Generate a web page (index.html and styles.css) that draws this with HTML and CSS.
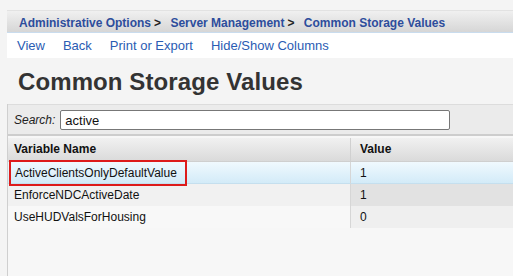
FILE: index.html
```html
<!DOCTYPE html>
<html>
<head>
<meta charset="utf-8">
<link rel="stylesheet" href="styles.css">
</head>
<body>
<div class="page">
  <div class="crumbs">
    <span class="crumb">Administrative Options</span><span class="sep">&gt;</span>
    <span class="crumb">Server Management</span><span class="sep">&gt;</span>
    <span class="crumb">Common Storage Values</span>
  </div>
  <div class="menu">
    <a>View</a><a>Back</a><a>Print or Export</a><a>Hide/Show Columns</a>
  </div>
  <h1 class="title">Common Storage Values</h1>
  <div class="panel">
    <div class="search">
      <label>Search:</label>
      <div class="input">active</div>
    </div>
    <div class="grid">
      <div class="hcell name">Variable Name</div>
      <div class="hcell val">Value</div>
      <div class="cell name sel"><span class="hl">ActiveClientsOnlyDefaultValue</span></div>
      <div class="cell val sel">1</div>
      <div class="cell name r2">EnforceNDCActiveDate</div>
      <div class="cell val r2v">1</div>
      <div class="cell name r3">UseHUDValsForHousing</div>
      <div class="cell val r3v">0</div>
    </div>
  </div>
</div>
</body>
</html>
```
FILE: styles.css
```css
html, body { margin: 0; padding: 0; }
body {
  background: #f4f4f4;
  font-family: "Liberation Sans", Arial, sans-serif;
  width: 513px;
  height: 276px;
  overflow: hidden;
}
.page { padding: 10px 0 0 7px; }
.crumbs {
  height: 23px;
  box-sizing: border-box;
  background: linear-gradient(#f0f0f0, #d6d6d6);
  border-top: 1px solid #e2e2e2;
  border-bottom: 1px solid #c9dcee;
  padding: 5px 0 0 12px;
  font-size: 12px;
  font-weight: bold;
  color: #2d4d9c;
  white-space: nowrap;
}
.sep { color: #222; margin: 0 6px 0 3px; }
.menu {
  height: 25px;
  background: #fff;
  display: flex;
  gap: 18px;
  padding: 5px 0 0 10px;
  box-sizing: border-box;
  font-size: 13px;
  color: #2a5cb3;
}
.title {
  margin: 0;
  padding: 10px 0 0 11px;
  height: 46px;
  box-sizing: border-box;
  font-size: 24px;
  line-height: 27px;
  font-weight: bold;
  color: #333;
  letter-spacing: 0.1px;
}
.panel { border-left: 1px solid #cfcfcf; height: 172px; background: #f7f7f7; }
.search {
  height: 32px;
  box-sizing: border-box;
  background: #ebebeb;
  border-top: 1px solid #dcdcdc;
  border-bottom: 2px solid #cdcdcd;
  display: flex;
  align-items: center;
  padding-left: 6px;
  font-size: 12px;
}
.search label { font-style: italic; color: #222; margin-right: 5px; }
.input {
  width: 390px;
  height: 20px;
  box-sizing: border-box;
  border: 1px solid #777;
  border-radius: 2px;
  background: #fff;
  font-size: 13px;
  padding: 2px 4px;
  color: #111;
}
.grid {
  margin-top: 2px;
  display: grid;
  grid-template-columns: 342px 1fr;
}
.hcell {
  height: 24px;
  box-sizing: border-box;
  background: linear-gradient(#f1f1f1, #dadada);
  font-weight: bold;
  font-size: 12px;
  color: #111;
  padding: 4px 0 0 6px;
  border-bottom: 1px solid #cfcfcf;
}
.hcell.val { border-left: 1px solid #d0d0d0; padding-left: 9px; }
.cell {
  height: 22px;
  box-sizing: border-box;
  font-size: 12px;
  color: #111;
  padding: 4px 0 0 6px;
}
.cell.val { border-left: 1px solid #d6d6d6; padding-left: 9px; }
.cell.sel {
  background: linear-gradient(#f0f9fe, #d3ebf8);
  border-bottom: 1px solid #c5dfee;
}
.cell.name.sel { padding-left: 7px; }
.hl { position: relative; }
.hl::after {
  content: "";
  position: absolute;
  left: -6px;
  right: -10px;
  top: -6px;
  bottom: -6px;
  border: 2px solid #dd1b1b;
}
.r2 { background: #f1f1f1; }
.r2v { background: #e2e2e2; }
.r3 { background: #f8f8f8; }
.r3v { background: #efefef; }
```
